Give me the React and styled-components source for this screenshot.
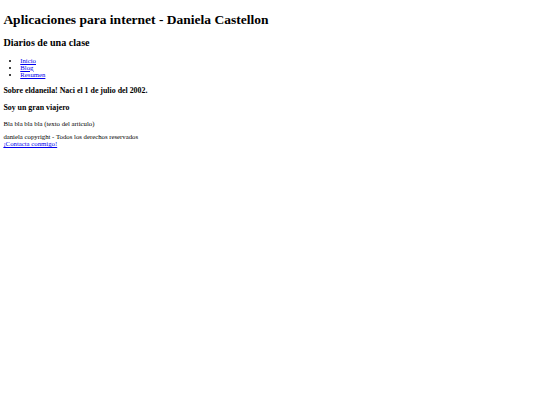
import React from "react";
import styled, { createGlobalStyle } from "styled-components";

const S = 540 / 1280;
const px = (v) => `${(v * S).toFixed(3)}px`;

const Global = createGlobalStyle`
  html, body { background: #ffffff; }
  body {
    margin: ${px(8)};
    font-family: "Liberation Serif", "Times New Roman", serif;
    font-size: ${px(16)};
    color: #000000;
  }
`;

const Title = styled.h1`
  font-size: ${px(32)};
  font-weight: bold;
  margin: ${px(32 * 0.67)} 0;
`;

const Subtitle = styled.h2`
  font-size: ${px(24)};
  font-weight: bold;
  margin: ${px(24 * 0.83)} 0;
`;

const Nav = styled.ul`
  margin: ${px(16)} 0;
  padding-left: ${px(40)};
  list-style: disc;
`;

const NavItem = styled.li``;

const Link = styled.a`
  color: #0000ee;
  text-decoration: underline;
`;

const Heading = styled.h3`
  font-size: ${px(18.72)};
  font-weight: bold;
  margin: ${px(18.72)} 0;
`;

const Text = styled.p`
  margin: ${px(16)} 0;
`;

const Footer = styled.footer`
  margin: 0;
`;

export default function App() {
  return (
    <>
      <Global />
      <header>
        <Title>Aplicaciones para internet - Daniela Castellon</Title>
        <Subtitle>Diarios de una clase</Subtitle>
        <nav>
          <Nav>
            <NavItem><Link href="#">Inicio</Link></NavItem>
            <NavItem><Link href="#">Blog</Link></NavItem>
            <NavItem><Link href="#">Resumen</Link></NavItem>
          </Nav>
        </nav>
      </header>
      <section>
        <Heading>Sobre eldaneila! Naci el 1 de julio del 2002.</Heading>
        <article>
          <Heading>Soy un gran viajero</Heading>
          <Text>Bla bla bla bla (texto del articulo)</Text>
        </article>
      </section>
      <Footer>
        <Text>
          daniela copyright - Todos los derechos reservados
          <br />
          <Link href="#">¡Contacta conmigo!</Link>
        </Text>
      </Footer>
    </>
  );
}
